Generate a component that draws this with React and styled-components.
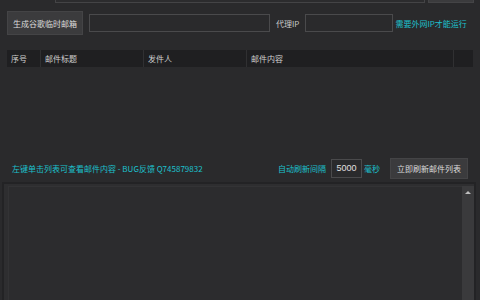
import React, { useState } from 'react'
import styled, { createGlobalStyle } from 'styled-components'

const Global = createGlobalStyle`
  html, body {
    margin: 0;
    padding: 0;
    background: #2a2a2c;
  }
  * {
    box-sizing: border-box;
  }
`

const Wraper = styled.div`
  width: 480px;
  height: 300px;
  overflow: hidden;
  background: #2a2a2c;
  display: flex;
  flex-direction: column;
  font-family: "Noto Sans CJK SC", "Liberation Sans", sans-serif;
  font-size: 8px;
  color: #c9c9c9;
`

const TopStrip = styled.div`
  height: 3px;
  display: flex;
  align-items: flex-end;
  overflow: hidden;
`
const CutBox = styled.div`
  flex-shrink: 0;
  height: 20px;
  margin-left: ${(p) => p.left}px;
  width: ${(p) => p.w}px;
  border: 1px solid #444446;
  background: ${(p) => p.bg || '#2c2c2e'};
`

const Row = styled.div`
  display: flex;
  align-items: center;
  padding: 8px 7px 0 7px;
`

const Button = styled.div`
  flex-shrink: 0;
  height: ${(p) => p.h || 24}px;
  margin-left: ${(p) => p.ml || 0}px;
  display: flex;
  align-items: center;
  justify-content: center;
  width: ${(p) => p.w}px;
  background: #3b3b3d;
  border: 1px solid #444446;
  color: #dcdcdc;
  font-size: 8px;
  white-space: nowrap;
`

const Input = styled.input`
  flex-shrink: 0;
  width: ${(p) => p.w}px;
  height: ${(p) => p.h || 18}px;
  margin: 0 ${(p) => p.mr || 0}px 0 ${(p) => p.ml || 0}px;
  background: #2a2a2c;
  border: 1px solid #4a4a4c;
  outline: none;
  color: #e0e0e0;
  font-family: "Liberation Sans", sans-serif;
  font-size: 9px;
  padding: 0 3px;
  text-align: ${(p) => p.align || 'left'};
`

const Label = styled.span`
  flex-shrink: 0;
  color: ${(p) => (p.cyan ? '#1cc0cc' : '#c9c9c9')};
  white-space: nowrap;
  font-size: 8px;
`

const Table = styled.div`
  margin: 15px 7px 0 7px;
  height: 100px;
  display: flex;
  flex-direction: column;
`
const HeaderRow = styled.div`
  display: grid;
  grid-template-columns: 33px 102px 102px 206px 1fr;
  gap: 1px;
  background: #303032;
  height: 17px;
`
const HeadCell = styled.div`
  background: #1f1f21;
  display: flex;
  align-items: center;
  padding-left: 4px;
  color: #cfcfcf;
  font-size: 8px;
`

const StatusRow = styled.div`
  display: flex;
  align-items: center;
  padding: 0 12px 0 12px;
  height: 22px;
  margin-top: 7px;
`
const Hint = styled.span`
  color: #1cc0cc;
  font-size: 8px;
  white-space: nowrap;
  flex: 1;
`
const Controls = styled.div`
  display: flex;
  align-items: center;
`

const LogBox = styled.div`
  margin: 3px 4px 0 2px;
  flex: 1;
  border: 2px solid #232325;
  border-bottom: none;
  background: #2e2e30;
  display: flex;
  padding: 2px 0 0 4px;
`
const LogArea = styled.textarea`
  flex: 1;
  background: #2c2c2e;
  border: none;
  border-left: 1px solid #333335;
  border-top: 1px solid #333335;
  outline: none;
  resize: none;
  color: #ddd;
`
const Scroll = styled.div`
  width: 12px;
  background: #3a3a3c;
  display: flex;
  justify-content: center;
  padding-top: 5px;
`
const Arrow = styled.div`
  width: 0;
  height: 0;
  border-left: 3px solid transparent;
  border-right: 3px solid transparent;
  border-bottom: 3px solid #bdbdbd;
`

const App = () => {
  const [interval, setInterval2] = useState('5000')
  return (
    <>
      <Global />
      <Wraper>
        <TopStrip>
          <CutBox left={55} w={370} />
          <CutBox left={3} w={46} bg="#3b3b3d" />
        </TopStrip>
        <Row>
          <Button w={76}>生成谷歌临时邮箱</Button>
          <Input w={181} ml={6} mr={6} />
          <Label>代理IP</Label>
          <Input w={88} ml={6} mr={2} />
          <Label cyan>需要外网IP才能运行</Label>
        </Row>
        <Table>
          <HeaderRow>
            <HeadCell>序号</HeadCell>
            <HeadCell>邮件标题</HeadCell>
            <HeadCell>发件人</HeadCell>
            <HeadCell>邮件内容</HeadCell>
            <HeadCell />
          </HeaderRow>
        </Table>
        <StatusRow>
          <Hint>左键单击列表可查看邮件内容 - BUG反馈 Q745879832</Hint>
          <Controls>
            <Label cyan>自动刷新间隔</Label>
            <Input
              w={31}
              h={19}
              ml={5}
              mr={2}
              align="center"
              value={interval}
              onChange={(e) => setInterval2(e.target.value)}
            />
            <Label cyan>毫秒</Label>
            <Button w={78} h={21} ml={10}>
              立即刷新邮件列表
            </Button>
          </Controls>
        </StatusRow>
        <LogBox>
          <LogArea />
          <Scroll>
            <Arrow />
          </Scroll>
        </LogBox>
      </Wraper>
    </>
  )
}

export default App
